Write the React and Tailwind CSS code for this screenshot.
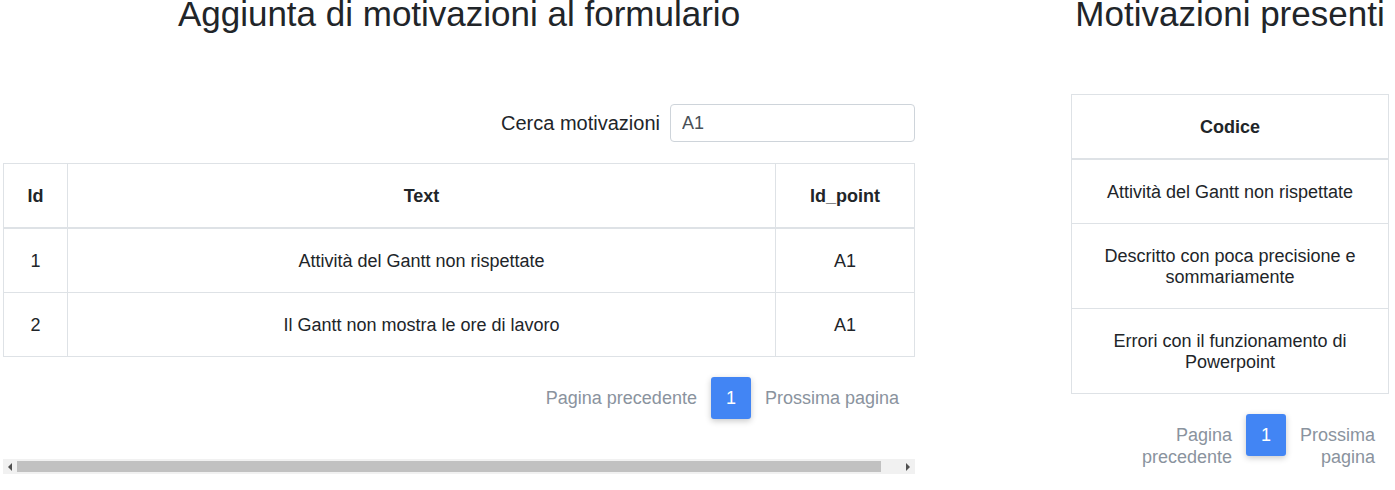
import React from 'react';

const leftRows = [
  { id: 1, text: 'Attività del Gantt non rispettate', point: 'A1' },
  { id: 2, text: 'Il Gantt non mostra le ore di lavoro', point: 'A1' },
];

const codes = [
  'Attività del Gantt non rispettate',
  'Descritto con poca precisione e sommariamente',
  'Errori con il funzionamento di Powerpoint',
];

function Pager({ wrap, padRight }) {
  return (
    <div className={`mt-[20px] flex items-start justify-end gap-[14px] ${padRight}`}>
      <span className={`pt-[10px] leading-[22px] text-[#8a939e] ${wrap ? 'w-min text-right' : ''}`}>Pagina precedente</span>
      <button className="flex h-[42px] w-[40px] items-center justify-center rounded-[3px] bg-[#4285f4] text-white shadow-[0_2px_6px_rgba(0,0,0,0.22)]">
        1
      </button>
      <span className={`pt-[10px] leading-[22px] text-[#8a939e] ${wrap ? 'w-min text-right' : ''}`}>Prossima pagina</span>
    </div>
  );
}

export default function App() {
  return (
    <div className="flex h-[490px] gap-[156px] overflow-hidden bg-white pl-[3px] font-['Liberation_Sans',Arial,sans-serif] text-[18px] leading-[21px] text-[#212529]">
      {/* left column */}
      <div className="w-[912px] shrink-0">
        <h2 className="mt-[-7px] text-center text-[35px] leading-[42px]">Aggiunta di motivazioni al formulario</h2>

        <div className="mt-[69px] flex items-center justify-end gap-[10px]">
          <label className="text-[20px]">Cerca motivazioni</label>
          <input
            className="h-[38px] w-[245px] rounded-[4px] border border-[#ced4da] px-[11px] text-[18px] text-[#495057] outline-none"
            value="A1"
            readOnly
          />
        </div>

        <table className="mt-[21px] w-[911px] table-fixed border-collapse">
          <thead>
            <tr>
              <th className="w-[64px] border border-b-2 border-[#dee2e6] pt-[22px] pb-[20px] text-center font-bold">Id</th>
              <th className="w-[708px] border border-b-2 border-[#dee2e6] pt-[22px] pb-[20px] text-center font-bold">Text</th>
              <th className="w-[139px] border border-b-2 border-[#dee2e6] pt-[22px] pb-[20px] text-center font-bold">Id_point</th>
            </tr>
          </thead>
          <tbody>
            {leftRows.map((r) => (
              <tr key={r.id}>
                <td className="border border-[#dee2e6] pt-[22px] pb-[20px] text-center">{r.id}</td>
                <td className="border border-[#dee2e6] pt-[22px] pb-[20px] text-center">{r.text}</td>
                <td className="border border-[#dee2e6] pt-[22px] pb-[20px] text-center">{r.point}</td>
              </tr>
            ))}
          </tbody>
        </table>

        <Pager padRight="pr-[16px]" />

        {/* horizontal scrollbar */}
        <div className="mt-[40px] flex h-[15px] items-center bg-[#f1f1f1]">
          <div className="flex w-[14px] justify-center">
            <div className="h-0 w-0 border-y-[4px] border-r-[4px] border-y-transparent border-r-[#505050]" />
          </div>
          <div className="h-[11px] w-[864px] bg-[#c1c1c1]" />
          <div className="flex-1" />
          <div className="flex w-[14px] justify-center">
            <div className="h-0 w-0 border-y-[4px] border-l-[4px] border-y-transparent border-l-[#505050]" />
          </div>
        </div>
      </div>

      {/* right column */}
      <div className="w-[318px] shrink-0">
        <h2 className="mt-[-7px] text-center text-[35px] leading-[42px] whitespace-nowrap">Motivazioni presenti</h2>

        <table className="mt-[59px] w-[318px] table-fixed border-collapse">
          <thead>
            <tr>
              <th className="border border-b-2 border-[#dee2e6] pt-[22px] pb-[20px] text-center font-bold">Codice</th>
            </tr>
          </thead>
          <tbody>
            {codes.map((c) => (
              <tr key={c}>
                <td className="border border-[#dee2e6] px-[18px] pt-[22px] pb-[20px] text-center">{c}</td>
              </tr>
            ))}
          </tbody>
        </table>

        <Pager wrap padRight="pr-[14px]" />
      </div>
    </div>
  );
}
